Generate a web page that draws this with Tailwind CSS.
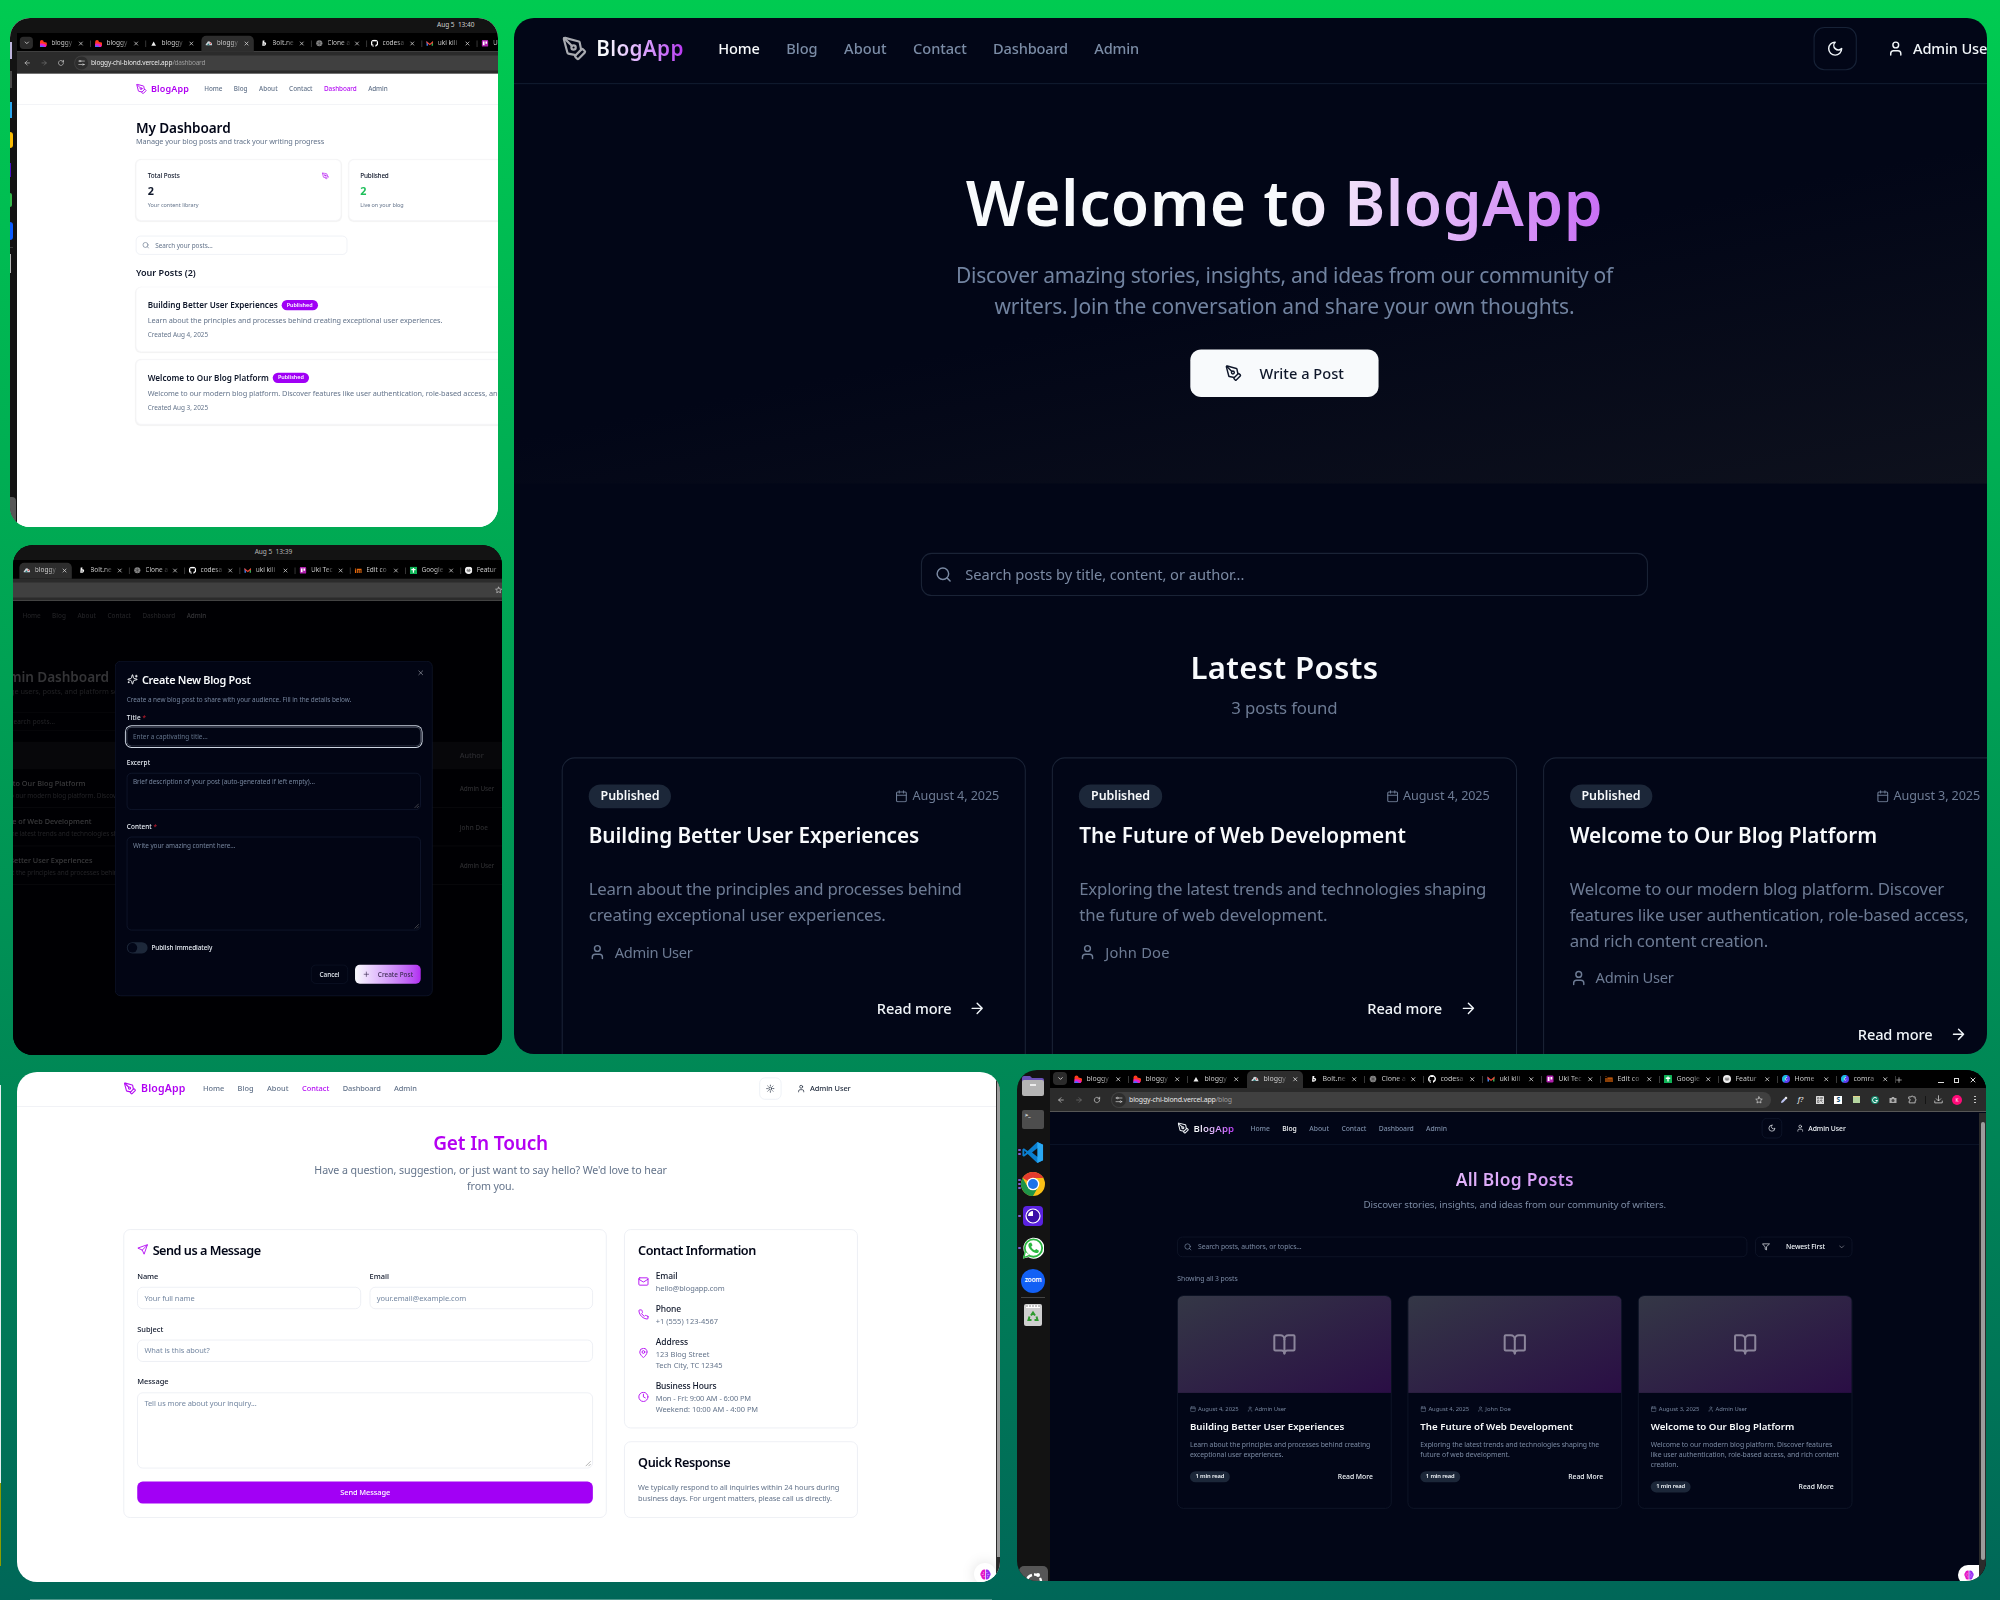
<!DOCTYPE html>
<html lang="en">
<head>
<meta charset="utf-8">
<title>BlogApp showcase</title>
<script src="https://cdn.jsdelivr.net/npm/@tailwindcss/browser@4"></script>
</head>
<body class="w-[2000px] h-[1600px] overflow-hidden font-['Noto_Sans',sans-serif] [font-size-adjust:0.52]">

<!-- icon sprite -->
<svg class="hidden" xmlns="http://www.w3.org/2000/svg">
  <symbol id="pen" viewBox="0 0 24 24"><path d="M15.707 21.293a1 1 0 0 1-1.414 0l-1.586-1.586a1 1 0 0 1 0-1.414l5.586-5.586a1 1 0 0 1 1.414 0l1.586 1.586a1 1 0 0 1 0 1.414z"/><path d="m18 13-1.375-6.874a1 1 0 0 0-.746-.776L3.235 2.028a1 1 0 0 0-1.207 1.207L5.35 15.879a1 1 0 0 0 .776.746L13 18"/><path d="m2.3 2.3 7.286 7.286"/><circle cx="11" cy="11" r="2"/></symbol>
  <symbol id="moon" viewBox="0 0 24 24"><path d="M12 3a6 6 0 0 0 9 9 9 9 0 1 1-9-9Z"/></symbol>
  <symbol id="sun" viewBox="0 0 24 24"><circle cx="12" cy="12" r="4"/><path d="M12 2v2M12 20v2M4.93 4.93l1.41 1.41M17.66 17.66l1.41 1.41M2 12h2M20 12h2M6.34 17.66l-1.41 1.41M19.07 4.93l-1.41 1.41"/></symbol>
  <symbol id="user" viewBox="0 0 24 24"><path d="M19 21v-2a4 4 0 0 0-4-4H9a4 4 0 0 0-4 4v2"/><circle cx="12" cy="7" r="4"/></symbol>
  <symbol id="cal" viewBox="0 0 24 24"><path d="M8 2v4M16 2v4M3 10h18"/><rect x="3" y="4" width="18" height="18" rx="2"/></symbol>
  <symbol id="arrow" viewBox="0 0 24 24"><path d="M5 12h14M12 5l7 7-7 7"/></symbol>
  <symbol id="search" viewBox="0 0 24 24"><circle cx="11" cy="11" r="8"/><path d="m21 21-4.3-4.3"/></symbol>
  <symbol id="book" viewBox="0 0 24 24"><path d="M12 7v14"/><path d="M3 18a1 1 0 0 1-1-1V4a1 1 0 0 1 1-1h5a4 4 0 0 1 4 4 4 4 0 0 1 4-4h5a1 1 0 0 1 1 1v13a1 1 0 0 1-1 1h-6a3 3 0 0 0-3 3 3 3 0 0 0-3-3z"/></symbol>
  <symbol id="filter" viewBox="0 0 24 24"><path d="M22 3H2l8 9.46V19l4 2v-8.54z"/></symbol>
  <symbol id="chev" viewBox="0 0 24 24"><path d="m6 9 6 6 6-6"/></symbol>
  <symbol id="mail" viewBox="0 0 24 24"><rect x="2" y="4" width="20" height="16" rx="2"/><path d="m22 7-8.97 5.7a1.94 1.94 0 0 1-2.06 0L2 7"/></symbol>
  <symbol id="phone" viewBox="0 0 24 24"><path d="M22 16.92v3a2 2 0 0 1-2.18 2 19.79 19.79 0 0 1-8.63-3.07 19.5 19.5 0 0 1-6-6 19.79 19.79 0 0 1-3.07-8.67A2 2 0 0 1 4.11 2h3a2 2 0 0 1 2 1.72 12.84 12.84 0 0 0 .7 2.81 2 2 0 0 1-.45 2.11L8.09 9.91a16 16 0 0 0 6 6l1.27-1.27a2 2 0 0 1 2.11-.45 12.84 12.84 0 0 0 2.81.7A2 2 0 0 1 22 16.92z"/></symbol>
  <symbol id="pin" viewBox="0 0 24 24"><path d="M20 10c0 4.993-5.539 10.193-7.399 11.799a1 1 0 0 1-1.202 0C9.539 20.193 4 14.993 4 10a8 8 0 0 1 16 0"/><circle cx="12" cy="10" r="3"/></symbol>
  <symbol id="clock" viewBox="0 0 24 24"><circle cx="12" cy="12" r="10"/><path d="M12 6v6l4 2"/></symbol>
  <symbol id="send" viewBox="0 0 24 24"><path d="m22 2-7 20-4-9-9-4Z"/><path d="M22 2 11 13"/></symbol>
  <symbol id="sparkles" viewBox="0 0 24 24"><path d="M9.937 15.5A2 2 0 0 0 8.5 14.063l-6.135-1.582a.5.5 0 0 1 0-.962L8.5 9.936A2 2 0 0 0 9.937 8.5l1.582-6.135a.5.5 0 0 1 .963 0L14.063 8.5A2 2 0 0 0 15.5 9.937l6.135 1.581a.5.5 0 0 1 0 .964L15.5 14.063a2 2 0 0 0-1.437 1.437l-1.582 6.135a.5.5 0 0 1-.963 0z"/><path d="M20 3v4M22 5h-4M4 17v2M5 18H3"/></symbol>
  <symbol id="x" viewBox="0 0 24 24"><path d="M18 6 6 18M6 6l12 12"/></symbol>
  <symbol id="plus" viewBox="0 0 24 24"><path d="M5 12h14M12 5v14"/></symbol>
  <symbol id="reload" viewBox="0 0 24 24"><path d="M20 12a8 8 0 1 1-2.4-5.7L20 8.5M20 3.5v5h-5"/></symbol>
  <symbol id="tune" viewBox="0 0 24 24"><path d="M11 6h10M3 6h2M13 17H3M19 17h2"/><circle cx="7" cy="6" r="2.5"/><circle cx="16.5" cy="17" r="2.5"/></symbol>
  <symbol id="star" viewBox="0 0 24 24"><path d="m12 2.500 2.900 6.300 6.900.8-5.100 4.700 1.400 6.800-6.100-3.400-6.100 3.400 1.400-6.800-5.100-4.700 6.900-.8z"/></symbol>
  <symbol id="download" viewBox="0 0 24 24"><path d="M12 2v13M6 10l6 6 6-6M2 16v5h20v-5"/></symbol>
  <symbol id="puzzle" viewBox="0 0 24 24"><path d="M3 5h5.500a2.500 2.500 0 0 1 5 0H19v5.500a2.500 2.500 0 0 1 0 5V21H3v-5a3 3 0 0 0 0-6z"/></symbol>

  <!-- favicons -->
  <symbol id="f-lov" viewBox="0 0 16 16"><path d="M1 5a4 4 0 0 1 4-4c2 0 4 1.500 4 4l3.500 1A3.500 3.500 0 0 1 16 10c0 3-2 6-5 6H1z" fill="#ff3b1f"/><path d="M1 9c4-1 8 0 11 1l3 3c-1 2-2 3-4 3H1z" fill="#e91ec9"/><path d="M1 13c3-1 7-1 9 3H1z" fill="#4b6bff"/></symbol>
  <symbol id="f-tri" viewBox="0 0 16 16"><path d="M8 4l5 9H3z" fill="#eee"/></symbol>
  <symbol id="f-cloud" viewBox="0 0 16 16"><path d="M1 12c0-3 1.500-4 3-4 0-4 4-6 7-3 3 1 4 4 4 7z" fill="#c9d4da"/><path d="M4 12l3-4 3 4z" fill="#2d7c7a"/><circle cx="11" cy="8" r="1.500" fill="#d33"/></symbol>
  <symbol id="f-bolt" viewBox="0 0 16 16"><path d="M5 2h4L8 6c4-1 5 2 4 4-1 3-4 4-8 3z" fill="#f4f4f4"/><circle cx="8" cy="9.500" r="1.300" fill="#000"/></symbol>
  <symbol id="f-ai" viewBox="0 0 16 16"><circle cx="8" cy="8" r="6.500" fill="#8e8e8e"/><path d="M8 1.500v13M2.500 4.800l11 6.400M2.500 11.200l11-6.400" stroke="#333" stroke-width="1"/></symbol>
  <symbol id="f-gh" viewBox="0 0 16 16"><path fill="#fff" d="M8 0C3.580 0 0 3.580 0 8c0 3.540 2.290 6.530 5.470 7.590.4.070.55-.17.55-.38 0-.19-.01-.82-.01-1.490-2.010.37-2.530-.49-2.690-.94-.09-.23-.48-.94-.82-1.130-.28-.15-.68-.52-.01-.53.63-.01 1.080.58 1.230.82.72 1.210 1.870.87 2.330.66.07-.52.28-.87.51-1.070-1.780-.2-3.640-.89-3.640-3.950 0-.87.31-1.590.82-2.150-.08-.2-.36-1.020.08-2.120 0 0 .67-.21 2.200.82a7.600 7.600 0 0 1 4 0c1.530-1.040 2.200-.82 2.200-.82.44 1.100.16 1.920.08 2.120.51.56.82 1.270.82 2.150 0 3.070-1.870 3.750-3.650 3.950.29.25.54.73.54 1.480 0 1.070-.01 1.930-.01 2.200 0 .21.15.46.55.38A8 8 0 0 0 16 8c0-4.420-3.580-8-8-8"/></symbol>
  <symbol id="f-gm" viewBox="0 0 16 16"><path d="M1 3v10h3V7z" fill="#4285f4"/><path d="M15 3v10h-3V7z" fill="#34a853"/><path d="M1 3l7 6 7-6v4l-7 5-7-5z" fill="#ea4335"/></symbol>
  <symbol id="f-tr" viewBox="0 0 16 16"><rect x="1" y="1" width="14" height="14" rx="2.500" fill="#b01fae"/><rect x="3.500" y="4" width="3.500" height="8" fill="#fff"/><rect x="9" y="4" width="3.500" height="5" fill="#fff"/></symbol>
  <symbol id="f-in" viewBox="0 0 16 16"><path d="M2 6v8M6 14V6h8v8M10 6v8M2 3v1" fill="none" stroke="#e8690b" stroke-width="2.400"/></symbol>
  <symbol id="f-gs" viewBox="0 0 16 16"><rect width="16" height="16" rx="1" fill="#0fb457"/><path d="M8 3v10M3.500 6.500h9" stroke="#fff" stroke-width="2.600"/></symbol>
  <symbol id="f-ft" viewBox="0 0 16 16"><circle cx="8" cy="8" r="8" fill="#eee"/><path d="M3.500 8h9M5 6h2M9 6h2M5 10h6" stroke="#333" stroke-width="1.300"/></symbol>
  <symbol id="f-cv" viewBox="0 0 16 16"><circle cx="8" cy="8" r="8" fill="#5a3df0"/><path d="M0 8a8 8 0 0 1 11-7.400L4 15A8 8 0 0 1 0 8" fill="#12bfd6"/><path d="M10.500 6c-.5-2-3.500-1.500-4 1.500s2.500 4 4.200 2" fill="none" stroke="#fff" stroke-width="1.300"/></symbol>
  <symbol id="brain" viewBox="0 0 16 16"><path d="M7.500 1C4 0 2 3 2 4c-2 2-2 5 0 7 0 3 3 5 5.500 4z" fill="#e515c5"/><path d="M8.500 1C12 0 14 3 14 4c2 2 2 5 0 7 0 3-3 5-5.500 4z" fill="#9a2cf5"/><path d="M2.500 8h3M5 4.500v2M10.500 8h3M11 10v2M5 11h2M9 5h2" stroke="#fff" stroke-width=".8" opacity=".8"/></symbol>
</svg>

<main class="relative w-[2000px] h-[1600px] overflow-hidden bg-[linear-gradient(180deg,#00cb51,#006758)]">
  <!-- neighbours peeking in at the edges -->
  <div class="absolute left-0 top-[1085px] w-px h-[398px] bg-[#e3eef0]"></div>
  <div class="absolute left-0 top-[1483px] w-px h-[83px] bg-[#8c9c00]"></div>
  <div class="absolute left-[30px] top-[1599px] w-[962px] h-px bg-[#4c968a]"></div>

  <div class="flex pt-[18px]">
    <div class="w-[514px]">
      <section id="dash" class="ml-[10px] w-[488px] h-[509px] rounded-[20px] overflow-hidden bg-white"></section>
      <section id="modal" class="ml-[13px] mt-[18px] w-[489px] h-[510px] rounded-[20px] overflow-hidden bg-black"></section>
    </div>
    <section id="home" class="w-[1473px] h-[1036px] rounded-[20px] overflow-hidden bg-[#020617]"></section>
  </div>
  <div class="flex mt-[15px]">
    <section id="contact" class="ml-[17px] mt-[2px] w-[983px] h-[510px] rounded-[20px] overflow-hidden bg-white relative"></section>
    <section id="blog" class="ml-[17px] w-[969px] h-[511px] rounded-[20px] overflow-hidden bg-[#131313] flex relative"></section>
  </div>
</main>

<script>
const ic = (id, cls) => `<svg class="${cls} shrink-0" fill="none" stroke="currentColor" stroke-width="2" stroke-linecap="round" stroke-linejoin="round"><use href="#${id}"/></svg>`;
const t = (s, w, cls = '') => `<span data-w="${w}" class="inline-block whitespace-nowrap ${cls}">${s}</span>`;

/* ---------- site header ---------- */
function siteHeader(dark, active, logoCls) {
  const items = [['Home', 38.3], ['Blog', 29.1], ['About', 39.4], ['Contact', 49.6], ['Dashboard', 69.2], ['Admin', 41.2]];
  const on = dark ? 'text-[#f8fafc]' : 'text-[#b30cf3]';
  const off = dark ? 'text-[#7b8ca6]' : 'text-[#64748b]';
  return `<header class="h-[65px] px-[252px] flex items-center border-b ${dark ? 'border-[#152036]' : 'border-[#e5e7ee]'}">
    <div class="flex items-center gap-2 mr-8 ${dark ? logoCls : 'text-[#b30cf3]'}">${ic('pen', 'size-6')}
      ${t('BlogApp', 80.8, dark ? 'text-xl font-semibold bg-linear-to-r from-[#f8fafc] from-10% to-[#b931f3] bg-clip-text text-transparent' : 'text-xl font-semibold text-[#b000f2]')}</div>
    <nav class="flex gap-[24.4px] text-sm font-medium">${items.map(([n, w]) => t(n, w, n === active ? on : off)).join('')}</nav>
    <div class="ml-auto flex items-center gap-3 ${dark ? 'text-[#f1f5f9]' : 'text-[#1e293b]'}">
      <div class="size-10 rounded-[10px] border flex items-center justify-center ${dark ? 'border-[#172237]' : 'border-[#e2e8f0]'}">${ic(dark ? 'moon' : 'sun', 'size-4')}</div>
      <div class="pl-4 pr-[13px] flex items-center gap-2 text-sm font-medium">${ic('user', 'size-4')}${t('Admin User', 74)}</div>
    </div>
  </header>`;
}

/* ---------- browser window chrome ---------- */
function chrome(url, urlW, path, pathW) {
  const tabs = [['f-lov', 'bloggy'], ['f-lov', 'bloggy'], ['f-tri', 'bloggy'], ['f-cloud', 'bloggy'], ['f-bolt', 'Bolt.ne'], ['f-ai', 'Clone a'], ['f-gh', 'codesa'], ['f-gm', 'uki kili'], ['f-tr', 'Uki Tec'], ['f-in', 'Edit co'], ['f-gs', 'Google'], ['f-ft', 'Featur'], ['f-cv', 'Home'], ['f-cv', 'comra']];
  return `<div class="page w-[936px] text-[#d8d8d8]">
    <div class="h-5 bg-black flex items-end">
      <div class="ml-[3px] mr-[3px] mb-[3.5px] w-[14px] h-[13px] rounded-[4px] bg-[#2b2b2b] flex items-center justify-center">${ic('chev', 'size-[7px] [stroke-width:3]')}</div>
      ${tabs.map(([f, n], i) => `<div class="w-[59px] h-[17px] flex">
        <div class="w-[56px] h-[17px] pl-1 pb-px flex items-center ${i === 3 ? 'bg-[#2d2d2d] rounded-t-[5px]' : ''}">
          <svg class="size-[8px] shrink-0"><use href="#${f}"/></svg>
          <span class="ml-[4.5px] w-[24px] overflow-hidden whitespace-nowrap text-[7.2px] leading-[12px] bg-linear-to-r from-[#dcdcdc] from-60% to-[#dcdcdc]/10 bg-clip-text text-transparent">${n}</span>
          ${ic('x', 'ml-[4.5px] size-[6.5px] [stroke-width:3]')}
        </div>
        ${i === 2 || i === 3 ? '' : '<i class="ml-[1.5px] mt-[5px] w-px h-[7px] bg-[#3a3a3a]"></i>'}
      </div>`).join('')}
      <div class="h-[16px] flex items-center -ml-[1px]">${ic('plus', 'size-[8px]')}</div>
      <div class="ml-[35px] h-[16px] flex items-center gap-[10px]"><i class="w-[6px] h-px bg-[#ddd] mt-[4px]"></i><i class="size-[5px] border border-[#ddd]"></i>${ic('x', 'size-[8px] [stroke-width:3]')}</div>
    </div>
    <div class="h-[23px] bg-[#2b2b2b] flex items-center">
      <div class="flex items-center gap-[10px] ml-[7px]">
        <span class="flex rotate-180">${ic('arrow', 'size-[8px]')}</span><span class="flex text-[#777]">${ic('arrow', 'size-[8px]')}</span>${ic('reload', 'size-[8px]')}
      </div>
      <div class="ml-[9.5px] w-[660px] h-4 rounded-full bg-[#404040] flex items-center pl-px">
        <div class="size-[14px] rounded-full bg-[#2d2d2d] flex items-center justify-center">${ic('tune', 'size-[8px]')}</div>
        <span class="ml-[3.5px] text-[7.2px] leading-4 flex text-[#e8e8e8]">${t(url, urlW)}${t(path, pathW, 'text-[#9c9c9c]')}</span>
        <span class="ml-auto mr-[8px]">${ic('star', 'size-[8px]')}</span>
      </div>
      <div class="ml-[9px] flex items-center gap-[10.3px]">
        <svg class="size-[8px]" viewBox="0 0 16 16"><path d="M2 14l1-4 6-6 3 3-6 6z" fill="#bfc6f5"/><path d="M9 4l3-3 3 3-3 3z" fill="#fff"/></svg>
        <span class="w-[8px] text-[7px] italic font-semibold leading-[8px]">f?</span>
        <svg class="size-[8px]" viewBox="0 0 16 16"><rect width="16" height="16" rx="1" fill="#ddd"/><path d="M3 3h3v3H3zM9 3h4v2H9zM3 9h3v4H3zM9 8h3v2H9zM11 11l3 3" stroke="#555" fill="none" stroke-width="1.200"/></svg>
        <span class="size-[8px] bg-white text-[#0c4a6e] text-[7px] font-bold leading-[8px] text-center">S</span>
        <i class="size-[6.5px] mx-[.75px] bg-[#b5d6a0] border-t border-[#e8d48a]"></i>
        <svg class="size-[8px]" viewBox="0 0 16 16"><circle cx="8" cy="8" r="8" fill="#12876a"/><path d="M12 5a5 5 0 1 0 1 4H9" fill="none" stroke="#fff" stroke-width="2"/></svg>
        <svg class="size-[8px]" viewBox="0 0 16 16"><path d="M1 4h4l1-2h4l1 2h4v10H1z" fill="#aaa"/><circle cx="8" cy="9" r="3" fill="#444"/></svg>
        ${ic('puzzle', 'size-[9px]')}
      </div>
      <i class="ml-[8px] w-px h-[8px] bg-[#151515]"></i>
      <span class="ml-[8.5px]">${ic('download', 'size-[9px]')}</span>
      <span class="ml-[9px] size-[10px] rounded-full bg-[#ff0a78] text-white text-[5px] leading-[10px] text-center">K</span>
      <span class="ml-[12px] flex flex-col gap-[1.5px]"><i class="size-[1.5px] bg-[#ddd] rounded-full"></i><i class="size-[1.5px] bg-[#ddd] rounded-full"></i><i class="size-[1.5px] bg-[#ddd] rounded-full"></i></span>
    </div>
    <div class="h-px bg-[#565656]"></div>
  </div>`;
}

/* ---------- dashboard ---------- */
const stat = (label, lw, num, numCls, note, nw, icon) => `<div class="w-[434.7px] h-[130px] shrink-0 rounded-xl border border-[#eff0f5] shadow-xs p-6">
  <div class="flex justify-between items-center h-5 text-sm font-medium text-[#0f172a]">${t(label, lw)}${icon}</div>
  <div class="mt-[7px] text-2xl font-bold leading-8 ${numCls}">${num}</div>
  <div class="mt-1 text-xs text-[#64748b]">${t(note, nw)}</div></div>`;
const row = (title, tw, desc, dw, date) => `<div class="h-[138px] rounded-xl border border-[#eff0f5] shadow-xs p-6 mt-4">
  <div class="flex items-center gap-2 h-7 text-lg font-semibold text-[#0f172a]">${t(title, tw)}
    <span class="h-[22px] px-[11px] rounded-full bg-[#a000f5] text-white text-xs leading-[20px]">${t('Published', 55)}</span></div>
  <div class="mt-[6px] leading-6 text-[#64748b]">${t(desc, dw)}</div>
  <div class="mt-[9px] text-sm text-[#64748b]">${t(date, 128)}</div></div>`;
document.getElementById('dash').innerHTML = `
  <div class="h-[14.5px] bg-[#131313] pl-[427px] text-[6.8px] leading-[14px] text-[#cfcfcf] whitespace-pre">${t('Aug 5&nbsp; 13:40', 37.5)}</div>
  <div class="flex">
    <div class="w-[7px] h-[495px] bg-[#131313] shrink-0 flex flex-col">
      <i class="mt-[9px] w-[2px] h-[17px] bg-[#bdb4dc]"></i><i class="mt-[12px] w-[2px] h-[17px] bg-[#4a4a4a]"></i><i class="mt-[14px] w-[2px] h-[16px] bg-[#2aa6ee]"></i>
      <i class="mt-[14px] w-[3px] h-[16px] rounded-r-full bg-[#fbbc05]"></i><i class="mt-[15px] w-px h-[14px] bg-[#4b12c9]"></i>
      <i class="mt-[16px] w-[2px] h-[14px] rounded-r-full bg-[#35b84c]"></i><i class="mt-[15px] w-[3px] h-[18px] rounded-r-full bg-[#0b5cff]"></i>
      <i class="mt-[7px] w-[3px] h-px bg-[#3a3a3a]"></i><i class="mt-[6px] w-px h-[19px] bg-[#b5b5b5]"></i><i class="mt-auto w-[6px] h-[31px] rounded-tr-[4px] bg-[#565656]"></i>
    </div>
    <div class="w-[481px] overflow-hidden">
      <div class="h-[41px] overflow-hidden"><div class="origin-top-left scale-[.936]">${chrome('bloggy-chi-blond.vercel.app', 87, '/dashboard', 35)}</div></div>
      <div class="page w-[1840px] h-[1000px] origin-top-left scale-[.4718] bg-white">
        ${siteHeader(false, 'Dashboard')}
        <div class="px-[252px] pt-8">
          <h1 class="text-3xl leading-9 font-semibold text-[#020617]">${t('My Dashboard', 200.6)}</h1>
          <p class="-mt-[2px] leading-6 text-[#64748b]">${t('Manage your blog posts and track your writing progress', 399)}</p>
          <div class="mt-[26px] flex gap-4">
            ${stat('Total Posts', 67.8, '2', 'text-[#0f172a]', 'Your content library', 108, `<span class="text-[#b30cf3]">${ic('pen', 'size-4')}</span>`)}
            ${stat('Published', 60, '2', 'text-[#1fbf5b]', 'Live on your blog', 91.8, '')}
          </div>
          <div class="mt-8 w-[448px] h-10 rounded-[10px] border border-[#dfe4ec] flex items-center pl-3 gap-3 text-sm text-[#64748b]">${ic('search', 'size-4')}${t('Search your posts...', 121.5)}</div>
          <h2 class="mt-6 text-xl leading-7 font-semibold text-[#0f172a]">${t('Your Posts (2)', 127)}</h2>
          ${row('Building Better User Experiences', 275.5, 'Learn about the principles and processes behind creating exceptional user experiences.', 624.5, 'Created Aug 4, 2025')}
          ${row('Welcome to Our Blog Platform', 257, 'Welcome to our modern blog platform. Discover features like user authentication, role-based access, and rich content creation.', 907, 'Created Aug 3, 2025')}
        </div>
      </div>
    </div>
  </div>`;

/* ---------- create-post dialog ---------- */
const adminRow = (title, tw, sub, sw, who, ww) => `<div class="h-[81.5px] border-b border-[#101014] flex items-center">
  <div class="w-[1018px] pt-1"><div class="leading-6 font-medium text-[#3b3b3e]">${t(title, tw)}</div><div class="text-sm mt-[3px] text-[#222226]">${t(sub, sw)}</div></div>
  <div class="text-sm pt-[3px] text-[#2c2c30] font-medium">${t(who, ww)}</div></div>`;
document.getElementById('modal').innerHTML = `
  <div class="h-[15px] bg-[#131313] pl-[241.7px] text-[6.8px] leading-[14px] text-[#b5b5b5]">${t('Aug 5&nbsp; 13:39', 37.5)}</div>
  <div class="h-[41px] -ml-[177.8px] w-[900px]"><div class="origin-top-left scale-[.936]">${chrome('bloggy-chi-blond.vercel.app', 87, '/admin', 22)}</div></div>
  <div class="relative h-[454px] bg-[#000003]">
    <div class="page w-[1840px] -ml-[177.8px] origin-top-left scale-[.4725]">
      <nav class="h-16 pl-[397px] flex items-center gap-[24.4px] text-sm font-medium text-[#212125]">${t('Home', 38.1)}${t('Blog', 29.1)}${t('About', 39.4)}${t('Contact', 49.6)}${t('Dashboard', 69.2)}${t('Admin', 41.1, 'text-[#36363a]')}</nav>
      <div class="pl-[330px]">
        <h1 class="mt-[79px] text-3xl leading-9 font-semibold text-[#343437]">${t('Admin Dashboard', 250)}</h1>
        <p class="leading-6 text-[#202024]">${t('Manage users, posts, and platform settings', 310)}</p>
        <div class="mt-8 h-10 w-[800px] border-y border-[#0b0b0f] pl-10 text-sm leading-10 text-[#222226]">${t('Search posts...', 96)}</div>
      </div>
      <div class="mt-[23px] ml-[300px] w-[1300px] h-[58px] bg-[#07070a] pl-[1022px] leading-[59px] text-[#2c2c30] font-medium">${t('Author', 51)}</div>
      <div class="ml-[304px] w-[1300px]">
        ${adminRow('Welcome to Our Blog Platform', 226, 'Welcome to our modern blog platform. Discover features', 359.4, 'Admin User', 73)}
        ${adminRow('The Future of Web Development', 239, 'Exploring the latest trends and technologies shaping the', 354, 'John Doe', 60)}
        ${adminRow('Building Better User Experiences', 241, 'Learn about the principles and processes behind creating', 356.8, 'Admin User', 73)}
      </div>
    </div>
    <!-- dialog over the dimmed page -->
    <div class="absolute left-[101.7px] top-[59.7px]">
      <div class="page w-[672px] h-[709px] origin-top-left scale-[.4725] rounded-xl border border-[#1a2540] bg-[#020514] p-6 text-sm text-[#e8edf4] relative">
        <span class="absolute right-4 top-4 text-[#a7abb5]">${ic('x', 'size-4')}</span>
        <div class="-mt-[2px] flex items-center gap-2 h-8 text-2xl font-semibold text-[#f8fafc]">${ic('sparkles', 'size-6')}${t('Create New Blog Post', 230)}</div>
        <div class="mt-[17px] leading-5 text-[#76859d]">${t('Create a new blog post to share with your audience. Fill in the details below.', 474.8)}</div>
        <div class="mt-4 h-6 leading-6 font-medium">${t('Title', 29.6)} <span class="text-[#b91c2c]">*</span></div>
        <div class="mt-2 h-10 rounded-[10px] border border-[#4a5365] ring-2 ring-[#cdd5e1] ring-offset-2 ring-offset-[#020514] px-3 leading-[38px] text-[#64748b]">${t('Enter a captivating title...', 158)}</div>
        <div class="mt-6 h-6 leading-6 font-medium">${t('Excerpt', 49.4)}</div>
        <div class="relative mt-[9px] h-[78px] rounded-[10px] border border-[#1c2740] px-3 py-2 leading-5 text-[#76859d]">${t('Brief description of your post (auto-generated if left empty)...', 385)}<svg class="absolute right-0.5 bottom-0.5 size-3 text-[#888]" stroke="currentColor" viewBox="0 0 12 12"><path d="M11 2l-9 9M11 7l-4 4"/></svg></div>
        <div class="mt-6 h-6 leading-6 font-medium">${t('Content', 52.9)} <span class="text-[#b91c2c]">*</span></div>
        <div class="relative mt-[9px] h-[198px] rounded-[10px] border border-[#1c2740] px-3 py-2 leading-5 text-[#76859d]">${t('Write your amazing content here...', 216.6)}<svg class="absolute right-0.5 bottom-0.5 size-3 text-[#888]" stroke="currentColor" viewBox="0 0 12 12"><path d="M11 2l-9 9M11 7l-4 4"/></svg></div>
        <div class="mt-[25px] h-6 flex items-center gap-2 font-medium"><span class="w-11 h-6 rounded-full bg-[#1d283a] p-0.5"><i class="block size-5 rounded-full bg-[#020617]"></i></span>${t('Publish immediately', 129)}</div>
        <div class="mt-6 h-10 flex justify-end gap-[15px] font-medium">
          <span class="h-10 px-[17px] rounded-[10px] border border-[#141c30] leading-[38px]">${t('Cancel', 42.3)}</span>
          <span class="h-10 px-4 rounded-[10px] flex items-center gap-4 bg-linear-to-r from-[#f8fafc] to-[#b12af0] text-[#3a2a50]">${ic('plus', 'size-4')}${t('Create Post', 74.8)}</span>
        </div>
      </div>
    </div>
  </div>`;

/* ---------- home ---------- */
const homeCard = (date, title, tw, lines, who, ww) => `<article class="w-[429.3px] h-[420px] shrink-0 rounded-xl border border-[#1a2336] p-6">
  <div class="flex items-center justify-between h-[22px] text-xs">
    <span class="h-[22px] px-[11px] rounded-full bg-[#1c2739] text-[#f8fafc] font-semibold leading-[20px]">${t('Published', 54.4)}</span>
    <span class="flex items-center gap-1 text-[#6d7b94]">${ic('cal', 'size-3')}${t(date, 80, 'pb-0.5')}</span></div>
  <h3 class="mt-[11px] text-xl leading-7 font-semibold text-[#f8fafc]">${t(title, tw)}</h3>
  <p class="mt-[23px] mb-[13px] leading-6 text-[#6d7b94]">${lines.map(([s, w]) => t(s, w)).join('<br>')}</p>
  <div class="h-5 flex items-center gap-2 text-sm text-[#6d7b94]">${ic('user', 'size-4')}${t(who, ww)}</div>
  <div class="mt-6 h-9 px-3 flex items-center justify-end gap-4 text-sm font-medium text-[#f1f5f9]">${t('Read more', 69)}${ic('arrow', 'size-4')}</div>
</article>`;
document.getElementById('home').innerHTML = `
  <div class="page w-[1840px] -ml-[224.6px] -mt-[4.5px] origin-top-left scale-[1.082]">
    ${siteHeader(true, 'Home', 'text-[#a9abb1]')}
    <div class="h-[369px] pt-[79px] text-center bg-[linear-gradient(to_bottom_right,#020617_50%,#10131e)]">
      <h1 class="text-6xl leading-[60px] font-semibold">${t('Welcome to BlogApp', 589, 'pb-2 -mb-2 bg-[linear-gradient(90deg,#f8fafc_50%,#f0dffa_60%,#c96ef5)] bg-clip-text text-transparent')}</h1>
      <p class="mt-6 text-xl leading-7 text-[#7183a0]">${t('Discover amazing stories, insights, and ideas from our community of', 607)}<br>${t('writers. Join the conversation and share your own thoughts.', 536)}</p>
      <div class="mt-[25.5px] inline-flex h-11 px-8 rounded-[10px] items-center gap-4 bg-[#f8fafc] text-[#0f172a] text-sm font-medium">${ic('pen', 'size-4')}${t('Write a Post', 78)}</div>
    </div>
    <div class="px-[252px] pt-16">
      <div class="mx-auto w-[672px] h-10 rounded-[10px] border border-[#1a2336] flex items-center pl-3 gap-3 text-sm text-[#7b8aa3]">${ic('search', 'size-4')}${t('Search posts by title, content, or author...', 258)}</div>
      <h2 class="mt-[47.5px] text-center text-3xl leading-9 font-semibold text-[#f8fafc]">${t('Latest Posts', 173.8)}</h2>
      <p class="mt-[7px] mb-[34px] text-center leading-6 text-[#6d7b94]">${t('3 posts found', 98.2)}</p>
      <div class="flex gap-6">
        ${homeCard('August 4, 2025', 'Building Better User Experiences', 305.5, [['Learn about the principles and processes behind', 344.7], ['creating exceptional user experiences.', 274.5]], 'Admin User', 72)}
        ${homeCard('August 4, 2025', 'The Future of Web Development', 302, [['Exploring the latest trends and technologies shaping', 376.2], ['the future of web development.', 229.5]], 'John Doe', 59.7)}
        ${homeCard('August 3, 2025', 'Welcome to Our Blog Platform', 284.2, [['Welcome to our modern blog platform. Discover', 346], ['features like user authentication, role-based access,', 368.7], ['and rich content creation.', 183.5]], 'Admin User', 72)}
      </div>
    </div>
  </div>`;

/* ---------- contact ---------- */
const field = (label, lw, ph, pw, cls = 'flex-1') => `<div class="${cls}"><div class="h-6 leading-6 font-medium text-[#0f172a]">${t(label, lw)}</div>
  <div class="mt-2 h-10 rounded-[10px] border border-[#dfe4ec] px-3 leading-[38px] text-[#7487a1]">${t(ph, pw)}</div></div>`;
const info = (icon, label, lw, lines) => `<div class="flex items-center gap-3"><span class="text-[#b30cf3]">${ic(icon, 'size-5')}</span>
  <div><div class="leading-6 font-medium text-[#0f172a]">${t(label, lw)}</div>${lines.map(([s, w]) => `<div class="text-sm text-[#64748b]">${t(s, w)}</div>`).join('')}</div></div>`;
document.getElementById('contact').innerHTML = `
  <div class="page w-[1840px] -ml-[31.6px] -mt-[1px] origin-top-left scale-[.5496]">
    ${siteHeader(false, 'Contact')}
    <div class="px-[252px] pt-[46px]">
      <h1 class="text-center text-4xl leading-10 font-semibold text-[#b400f2]">${t('Get In Touch', 209)}</h1>
      <p class="mt-4 text-center text-xl leading-7 text-[#64748b]">${t("Have a question, suggestion, or just want to say hello? We'd love to hear", 641.5)}<br>${t('from you.', 85.7)}</p>
      <div class="mt-[65px] flex gap-8">
        <div class="w-[880px] h-[525px] rounded-xl border border-[#dfe4ec] p-6 text-sm">
          <div class="h-6 flex items-center gap-2 text-2xl leading-6 font-semibold text-[#020617]"><span class="text-[#b30cf3]">${ic('send', 'size-5')}</span>${t('Send us a Message', 196.5)}</div>
          <div class="mt-6 flex gap-4">${field('Name', 38, 'Your full name', 91.4)}${field('Email', 35.3, 'your.email@example.com', 162.7)}</div>
          <div class="mt-6">${field('Subject', 47.5, 'What is this about?', 118.8, '')}</div>
          <div class="mt-6 h-6 leading-6 font-medium text-[#0f172a]">${t('Message', 56.9)}</div>
          <div class="relative mt-2 h-[138px] rounded-[10px] border border-[#dfe4ec] px-3 py-2 leading-5 text-[#7487a1]">${t('Tell us more about your inquiry...', 204.4)}<svg class="absolute right-0.5 bottom-0.5 size-3 text-[#777]" stroke="currentColor" viewBox="0 0 12 12"><path d="M11 2l-9 9M11 7l-4 4"/></svg></div>
          <div class="mt-6 h-10 rounded-[10px] bg-[#a200f5] text-white text-center leading-10 font-medium">${t('Send Message', 90.7)}</div>
        </div>
        <div class="w-[425px]">
          <div class="h-[362px] rounded-xl border border-[#dfe4ec] p-6">
            <div class="text-2xl leading-6 font-semibold text-[#020617]">${t('Contact Information', 214.2)}</div>
            <div class="mt-6 flex flex-col gap-4">
              ${info('mail', 'Email', 39.4, [['hello@blogapp.com', 125.6]])}
              ${info('phone', 'Phone', 46, [['+1 (555) 123-4567', 113.5]])}
              ${info('pin', 'Address', 58.9, [['123 Blog Street', 97.7], ['Tech City, TC 12345', 121.4]])}
              ${info('clock', 'Business Hours', 110.4, [['Mon - Fri: 9:00 AM - 6:00 PM', 173.5], ['Weekend: 10:00 AM - 4:00 PM', 186.3]])}
            </div>
          </div>
          <div class="mt-6 h-[139px] rounded-xl border border-[#dfe4ec] p-6">
            <div class="text-2xl leading-6 font-semibold text-[#020617]">${t('Quick Response', 167.5)}</div>
            <div class="mt-6 text-sm text-[#64748b]">${t('We typically respond to all inquiries within 24 hours during', 366)}<br>${t('business days. For urgent matters, please call us directly.', 352.6)}</div>
          </div>
        </div>
      </div>
    </div>
  </div>
  <div class="absolute right-0 top-0 w-[4px] h-full bg-[#2b2b2b] pl-px"><i class="block h-[485px] bg-[#9c9c9c]"></i></div>
  <div class="absolute left-[957px] top-[491px] size-[22px] rounded-full bg-white shadow-[0_0_14px_rgba(0,0,0,.13)] flex items-center justify-center"><svg class="size-[11px]"><use href="#brain"/></svg></div>`;

/* ---------- blog list ---------- */
const blogCard = (date, who, ww, title, tw, lines) => `<article class="w-[424px] h-[422px] rounded-xl border border-[#1a2336] overflow-hidden">
  <div class="h-48 flex items-center justify-center text-[#8b859b] bg-[linear-gradient(to_bottom_right,#343746,#2a0e45)]">${ic('book', 'size-12')}</div>
  <div class="p-6">
    <div class="flex items-center gap-1 h-4 text-xs text-[#76859d]">${ic('cal', 'size-3')}${t(date, 80.5)}<span class="ml-3 flex">${ic('user', 'size-3')}</span>${t(who, ww)}</div>
    <h3 class="mt-[12px] text-xl leading-7 font-semibold text-[#f8fafc]">${t(title, tw)}</h3>
    <p class="mt-3 text-sm leading-5 text-[#7b8aa3]">${lines.map(([s, w]) => t(s, w)).join('<br>')}</p>
    <div class="mt-4 h-9 flex items-center justify-between">
      <span class="h-[22px] px-[11px] rounded-full bg-[#1c2739] text-[#f1f5f9] text-xs font-semibold leading-[20px]">${t('1 min read', 56.7)}</span>
      <span class="px-3 text-sm font-medium text-[#f1f5f9]">${t('Read More', 69.2)}</span></div>
  </div></article>`;
const dots = n => `<span class="absolute left-[-3px] flex flex-col gap-[1.5px]">${'<i class="size-[2.5px] rounded-full bg-[#7b5fd0]"></i>'.repeat(n)}</span>`;
document.getElementById('blog').innerHTML = `
  <aside class="w-[33px] shrink-0 pl-[4px] flex flex-col text-white">
    <svg class="mt-[5px] w-[24px] h-[22px]" viewBox="0 0 24 22"><path d="M1 3q0-2 2-2h6l2 2h10q2 0 2 2v4H1z" fill="#6a52b8"/><rect x="1" y="5" width="22" height="16" rx="2" fill="#b4b4b4"/><path d="M9 10h6" stroke="#fff" stroke-width="1.500"/></svg>
    <div class="mt-[13px] ml-px w-[22px] h-[19px] rounded-[2px] bg-[#4d4d4d] pl-[3px] text-[6px] leading-[10px] font-bold">&gt;_</div>
    <div class="relative mt-[12px] flex items-center h-[22px]">${dots(2)}<svg class="size-[23px]" viewBox="0 0 24 24"><path d="M17 1 7 10.500 3 7.500 1.500 8.500v7L3 16.500l4-3L17 23l6-3V4z" fill="#0a7fd0"/><path d="M17 1v22l6-3V4z" fill="#2aa9f3"/><path d="M17 7.500 11.500 12l5.500 4.500zM3.500 10v4l2-2z" fill="#131313"/></svg></div>
    <div class="relative mt-[9px] flex items-center h-[24px]">${dots(3)}<svg class="size-[24px]" viewBox="0 0 24 24"><circle cx="12" cy="12" r="12" fill="#fbc116"/><path d="M12 12 1.600 6A12 12 0 0 1 22.400 6H12z" fill="#e33b2e"/><path d="M1.600 6A12 12 0 0 0 12 24l5.200-9L12 12 6.800 15z" fill="#1e9448"/><circle cx="12" cy="12" r="6.300" fill="#fff"/><circle cx="12" cy="12" r="5" fill="#1a73e8"/></svg></div>
    <div class="relative mt-[10px] flex items-center h-[20px]">${dots(1)}<svg class="ml-[2px] size-[20px]" viewBox="0 0 20 20"><rect width="20" height="20" rx="4" fill="#5a22e0"/><circle cx="10" cy="10" r="7" fill="#3a0fa8" stroke="#fff" stroke-width="1.200"/><path d="M10 10V5a5 5 0 0 0-5 5z" fill="#fff"/></svg></div>
    <div class="relative mt-[10px] flex items-center h-[24px]">${dots(1)}<svg class="ml-px size-[22px]" viewBox="0 0 24 24"><path d="M1 23.500l1.800-6A11.500 11.500 0 1 1 7 22z" fill="#fff"/><circle cx="12.500" cy="12" r="9.500" fill="#fff" stroke="#2bb741" stroke-width="2"/><path d="M3.500 16 2 22.500 8.500 20" fill="#fff" stroke="#2bb741" stroke-width="1.500"/><path d="M8 6.500c-2 2-1 5 2 8s6 4 8 2l.5-1.500-3-2-1.500 1.500c-2-1-3-2-4-4l1.500-1.500L10 6z" fill="#2bb741"/></svg></div>
    <div class="mt-[9px] size-[24px] rounded-full bg-[#1260f5] text-[7px] leading-[22px] text-center font-semibold tracking-tighter">zoom</div>
    <i class="mt-[4px] w-[24px] h-px bg-[#444]"></i>
    <svg class="mt-[6px] ml-[2px] w-[20px] h-[23px]" viewBox="0 0 20 23"><rect x="1" width="18" height="22" rx="2" fill="#cfcfcf"/><path d="M3 1h14v3H3z" fill="#fff"/><path d="M3 2h14" stroke="#888" stroke-dasharray="2 1"/><path d="M8 11.500 10 8.500l2 3M13.500 12.500l1 3.500h-3M6.500 12.500l-1 3.500h3" fill="none" stroke="#2e9a2e" stroke-width="2"/></svg>
    <div class="mt-auto -ml-[2px] w-[29px] h-[15px] rounded-t-[5px] bg-[#565656] flex justify-center overflow-hidden"><svg class="mt-[6px] size-[18px]" viewBox="0 0 18 18"><path d="M2 10a7 7 0 0 1 5-7M9 2.500a7 7 0 0 1 3 .5M15 6a7 7 0 0 1 1 4" fill="none" stroke="#fff" stroke-width="2.400"/><circle cx="13" cy="3" r="2" fill="#fff"/></svg></div>
  </aside>
  <div class="w-[936px] overflow-hidden bg-[#020617]">
    <div class="-mt-[2px]">${chrome('bloggy-chi-blond.vercel.app', 86.7, '/blog', 16.3)}</div>
    <div class="page w-[1840px] -ml-[.3px] origin-top-left scale-[.5052]">
      ${siteHeader(true, 'Blog', 'text-[#f1f5f9]')}
      <div class="px-[252px] pt-12">
        <h1 class="text-center text-4xl leading-10 font-semibold">${t('All Blog Posts', 234, 'bg-linear-to-r from-[#e2b4fa] to-[#d596f6] bg-clip-text text-transparent pb-2 -mb-2')}</h1>
        <p class="mt-[17px] text-center text-xl leading-7 text-[#7b8aa3]">${t('Discover stories, insights, and ideas from our community of writers.', 598.7)}</p>
        <div class="mt-[49px] flex gap-4 text-sm">
          <div class="w-[1128px] h-10 rounded-[10px] border border-[#172033] flex items-center pl-3 gap-3 text-[#7b8aa3]">${ic('search', 'size-4')}${t('Search posts, authors, or topics...', 205)}</div>
          <div class="w-48 h-10 rounded-[10px] border border-[#172033] flex items-center pl-3 text-[#f1f5f9] font-medium">${ic('filter', 'size-4')}<span class="ml-8">${t('Newest First', 77)}</span><span class="ml-auto mr-3 opacity-60">${ic('chev', 'size-4')}</span></div>
        </div>
        <div class="mt-8 text-sm text-[#7b8aa3]">${t('Showing all 3 posts', 119.4)}</div>
        <div class="mt-6 flex gap-8">
          ${blogCard('August 4, 2025', 'Admin User', 62, 'Building Better User Experiences', 305.3, [['Learn about the principles and processes behind creating', 356.8], ['exceptional user experiences.', 184.6]])}
          ${blogCard('August 4, 2025', 'John Doe', 50.8, 'The Future of Web Development', 302, [['Exploring the latest trends and technologies shaping the', 354], ['future of web development.', 177.4]])}
          ${blogCard('August 3, 2025', 'Admin User', 62, 'Welcome to Our Blog Platform', 284.2, [['Welcome to our modern blog platform. Discover features', 359.4], ['like user authentication, role-based access, and rich content', 372.6], ['creation.', 54.7]])}
        </div>
      </div>
    </div>
  </div>
  <div class="absolute right-0 top-[43px] w-[7px] bottom-0 bg-[#2b2b2b] pl-[1.5px] pt-[9px]"><i class="block w-[4.5px] h-[438px] rounded-full bg-[#9c9c9c]"></i></div>
  <div class="absolute left-[941px] top-[495px] w-[21px] h-[20px] rounded-l-full bg-white flex items-center justify-center"><svg class="size-[10px] -mt-px"><use href="#brain"/></svg></div>`;

function fitLabels() {
  const labels = [...document.querySelectorAll('[data-w]')];
  labels.forEach(el => { el.style.letterSpacing = '0px'; });
  const spacing = labels.map(el => {
    const page = el.closest('.page');
    const k = page ? page.getBoundingClientRect().width / page.offsetWidth : 1;
    return (el.dataset.w - el.getBoundingClientRect().width / k) / el.textContent.length;
  });
  labels.forEach((el, i) => { el.style.letterSpacing = spacing[i].toFixed(3) + 'px'; });
}
const sized = new ResizeObserver(fitLabels);
document.querySelectorAll('main, .page').forEach(el => sized.observe(el));
addEventListener('load', () => { fitLabels(); requestAnimationFrame(fitLabels); });
document.fonts.ready.then(fitLabels);
</script>
</body>
</html>
